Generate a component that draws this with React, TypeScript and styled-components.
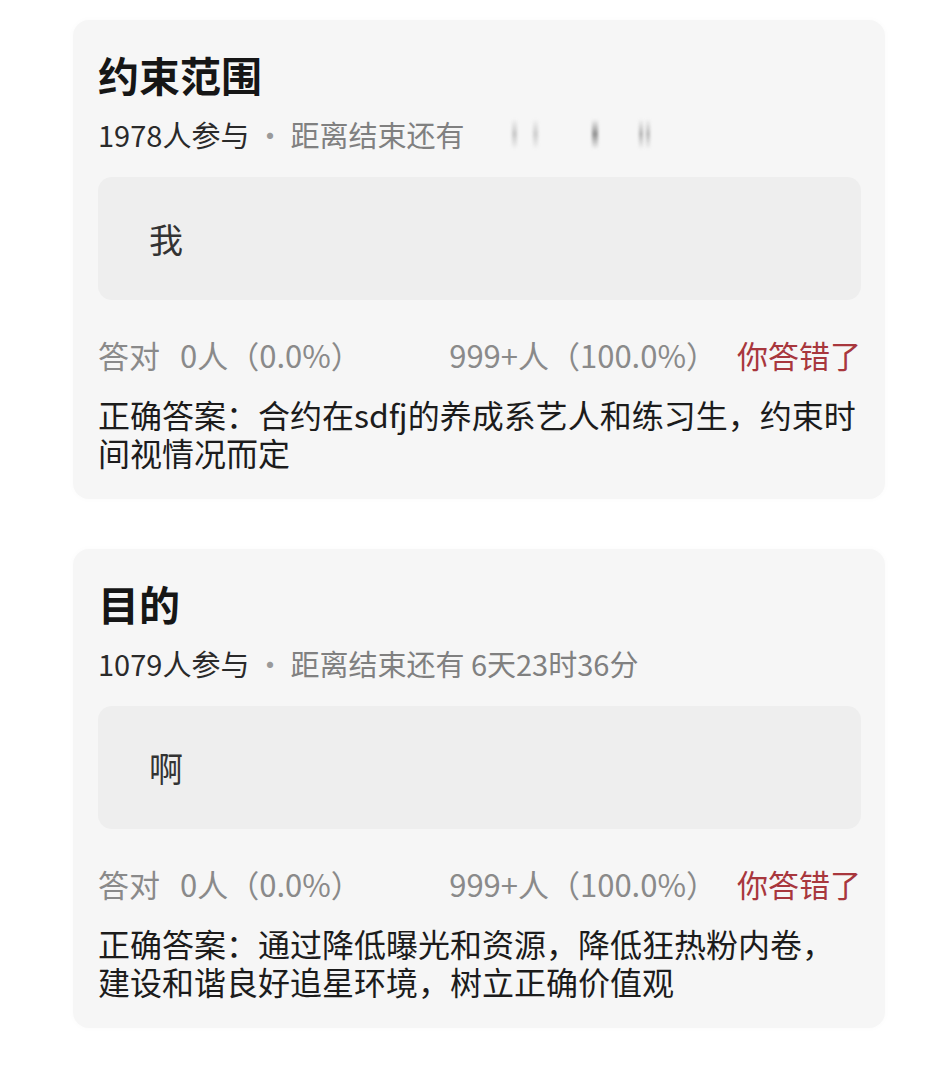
import React from "react";
import styled, { createGlobalStyle } from "styled-components";

const GlobalStyle = createGlobalStyle`
  html, body {
    margin: 0;
    padding: 0;
    background: #ffffff;
  }
  body {
    font-family: "Noto Sans CJK SC", "Noto Sans", sans-serif;
  }
`;

const Page = styled.div`
  width: 930px;
  min-height: 1080px;
  box-sizing: border-box;
  padding: 20px 0 0 73px;
  display: flex;
  flex-direction: column;
  gap: 50px;
  background: #ffffff;
`;

const Card = styled.section`
  width: 812px;
  box-sizing: border-box;
  padding: 30px 24px 24px 25px;
  background: #f6f6f6;
  border-radius: 16px;
  box-shadow: 0 0 6px rgba(0, 0, 0, 0.025);
  display: flex;
  flex-direction: column;
`;

const Title = styled.h2`
  margin: 0;
  font-size: 41px;
  line-height: 48px;
  font-weight: 700;
  color: #161616;
`;

const Meta = styled.div`
  margin-top: 18px;
  font-size: 29px;
  line-height: 36px;
  color: #808080;
  display: flex;
  align-items: center;
  white-space: nowrap;
`;

const Count = styled.span`
  color: #2a2a2a;
`;

const Dot = styled.span`
  margin: 0 6px 0 6px;
  color: #9a9a9a;
`;

const Redacted = styled.span`
  margin-left: 20px;
  display: inline-flex;
  align-items: stretch;
  height: 30px;
  width: 150px;
  position: relative;
`;

const Bar = styled.span<{ $x: number; $w: number; $o: number }>`
  position: absolute;
  top: 0;
  bottom: 0;
  left: ${(p) => p.$x}px;
  width: ${(p) => p.$w}px;
  background: linear-gradient(
    to bottom,
    rgba(120, 120, 120, 0),
    rgba(110, 110, 110, ${(p) => p.$o}) 50%,
    rgba(120, 120, 120, 0)
  );
  filter: blur(1.5px);
`;

const AnswerBox = styled.div`
  margin-top: 25px;
  height: 123px;
  box-sizing: border-box;
  padding-left: 51px;
  border-radius: 14px;
  background: #eeeeee;
  display: flex;
  align-items: center;
  font-size: 34px;
  color: #333333;
`;

const Stats = styled.div`
  margin-top: 35px;
  display: flex;
  justify-content: space-between;
  align-items: center;
  font-size: 31px;
  line-height: 40px;
  color: #8a8a8a;
  white-space: nowrap;
`;

const Group = styled.div<{ $gap: number }>`
  display: flex;
  align-items: center;
  gap: ${(p) => p.$gap}px;
`;

const Wrong = styled.span`
  color: #a8373d;
`;

const Correct = styled.p`
  margin: 20px 0 0;
  font-size: 32px;
  line-height: 38px;
  color: #1c1c1c;
  padding-bottom: 4px;
`;

type Poll = {
  title: string;
  count: string;
  remaining?: string;
  answer: string;
  correct: string;
};

const polls: Poll[] = [
  {
    title: "约束范围",
    count: "1978人参与",
    answer: "我",
    correct: "正确答案：合约在sdfj的养成系艺人和练习生，约束时间视情况而定",
  },
  {
    title: "目的",
    count: "1079人参与",
    remaining: "6天23时36分",
    answer: "啊",
    correct: "正确答案：通过降低曝光和资源，降低狂热粉内卷，建设和谐良好追星环境，树立正确价值观",
  },
];

const bars = [
  { x: 28, w: 5, o: 0.35 },
  { x: 49, w: 5, o: 0.3 },
  { x: 108, w: 6, o: 0.75 },
  { x: 155, w: 4, o: 0.5 },
  { x: 162, w: 4, o: 0.45 },
];

export default function App() {
  return (
    <>
      <GlobalStyle />
      <Page>
        {polls.map((p) => (
          <Card key={p.title}>
            <Title>{p.title}</Title>
            <Meta>
              <Count>{p.count}</Count>
              <Dot>·</Dot>
              <span>距离结束还有</span>
              {p.remaining ? (
                <span>&nbsp;{p.remaining}</span>
              ) : (
                <Redacted>
                  {bars.map((b, i) => (
                    <Bar key={i} $x={b.x} $w={b.w} $o={b.o} />
                  ))}
                </Redacted>
              )}
            </Meta>
            <AnswerBox>{p.answer}</AnswerBox>
            <Stats>
              <Group $gap={20}>
                <span>答对</span>
                <span>0人（0.0%）</span>
              </Group>
              <Group $gap={20}>
                <span>999+人（100.0%）</span>
                <Wrong>你答错了</Wrong>
              </Group>
            </Stats>
            <Correct>{p.correct}</Correct>
          </Card>
        ))}
      </Page>
    </>
  );
}
